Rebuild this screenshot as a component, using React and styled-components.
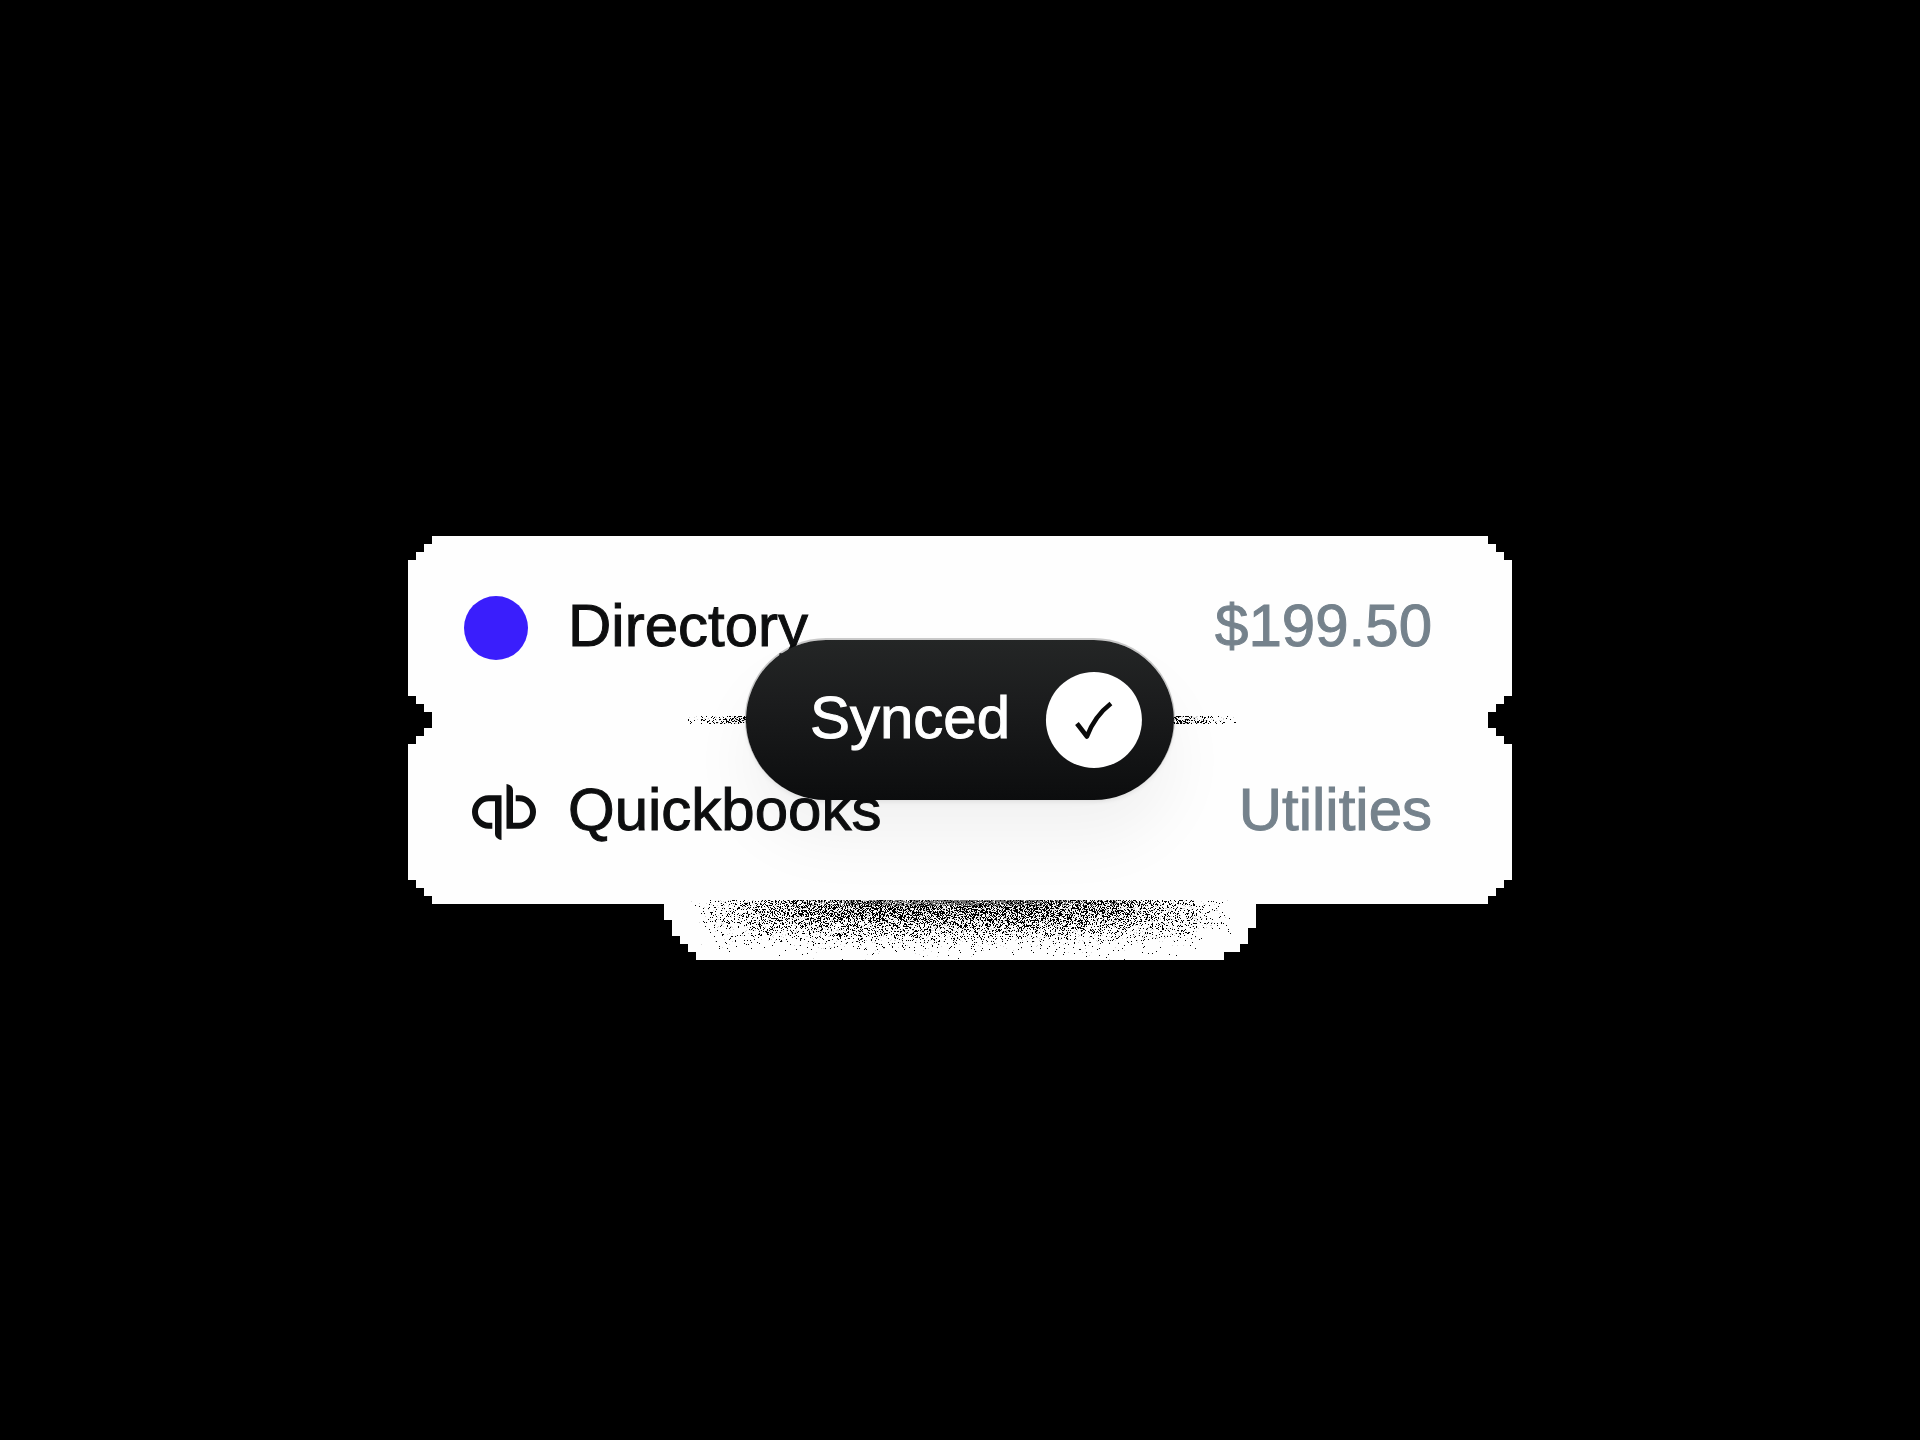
import React from 'react';
import styled, { createGlobalStyle, css } from 'styled-components';

const GlobalStyle = createGlobalStyle`
  *, *::before, *::after { box-sizing: border-box; }
  body {
    margin: 0;
    background: #000;
    font-family: "Liberation Sans", Arial, Helvetica, sans-serif;
  }
`;

const Page = styled.main`
  min-height: 100vh;
  display: grid;
  place-items: center;
  padding: 24px;
  background: #000;
`;

const Ticket = styled.section`
  position: relative;
  width: 100%;
  max-width: 1104px;
`;

const Rows = styled.ul`
  list-style: none;
  margin: 0;
  padding: 0;
  display: flex;
  flex-direction: column;
`;

/* Corners are cut in three 8px stairs. */
const Row = styled.li`
  display: flex;
  align-items: center;
  gap: 32px;
  padding: 56px 80px 56px 56px;
  background: #fefefe;
  clip-path: polygon(
    24px 0, calc(100% - 24px) 0,
    calc(100% - 24px) 8px, calc(100% - 16px) 8px,
    calc(100% - 16px) 16px, calc(100% - 8px) 16px,
    calc(100% - 8px) 24px, 100% 24px,
    100% calc(100% - 24px), calc(100% - 8px) calc(100% - 24px),
    calc(100% - 8px) calc(100% - 16px), calc(100% - 16px) calc(100% - 16px),
    calc(100% - 16px) calc(100% - 8px), calc(100% - 24px) calc(100% - 8px),
    calc(100% - 24px) 100%, 24px 100%,
    24px calc(100% - 8px), 16px calc(100% - 8px),
    16px calc(100% - 16px), 8px calc(100% - 16px),
    8px calc(100% - 24px), 0 calc(100% - 24px),
    0 24px, 8px 24px,
    8px 16px, 16px 16px,
    16px 8px, 24px 8px
  );
`;

const IconSlot = styled.span`
  display: flex;
  align-items: center;
  justify-content: ${({ $align }) => $align};
  flex: none;
  width: 72px;
  height: 72px;
`;

const Dot = styled.span`
  width: 64px;
  height: 64px;
  border-radius: 50%;
  background: #3a1efc;
`;

const labelText = css`
  font-size: 60px;
  line-height: 66px;
  padding-bottom: 4px;
  white-space: nowrap;
  -webkit-text-stroke: 1px currentColor;
`;

const Name = styled.span`
  ${labelText}
  flex: 1;
  color: #0d0e0f;
`;

const Value = styled.span`
  ${labelText}
  color: #75828c;
`;

const Pill = styled.div`
  position: absolute;
  top: 50%;
  left: 50%;
  transform: translate(-50%, -50%);
  display: flex;
  align-items: center;
  gap: 36px;
  padding: 32px 32px 32px 64px;
  border-radius: 80px;
  background: linear-gradient(180deg, #242626 0%, #1b1c1d 40%, #0c0d0e 100%);
  box-shadow: 0 -1px 0 1px rgba(0, 0, 0, 0.2), 0 2px 4px rgba(0, 0, 0, 0.08),
    0 40px 64px rgba(0, 0, 0, 0.05);
`;

const PillText = styled.span`
  ${labelText}
  color: #fff;
`;

const Badge = styled.span`
  display: block;
  width: 96px;
  height: 96px;
  border-radius: 50%;
  background: #fff;
`;

const Seam = styled.svg`
  position: absolute;
  top: 50%;
  left: 50%;
  transform: translate(-50%, -50%);
  display: block;
`;

/* The tab tucks 4px under the lower row and steps in towards its foot. */
const Tab = styled.div`
  position: absolute;
  top: calc(100% - 4px);
  left: 50%;
  transform: translateX(-50%);
  width: 592px;
  background: #fefefe;
  clip-path: polygon(
    0 0, 592px 0, 592px 28px, 584px 28px, 584px 44px, 576px 44px,
    576px 52px, 560px 52px, 560px 60px, 32px 60px, 32px 52px, 24px 52px,
    24px 44px, 16px 44px, 16px 36px, 8px 36px, 8px 20px, 0 20px
  );
`;

const Grain = styled.svg`
  display: block;
`;

function seeded(seed) {
  let s = seed;
  return () => {
    s = (s + 0x6d2b79f5) | 0;
    let t = Math.imul(s ^ (s >>> 15), 1 | s);
    t = (t + Math.imul(t ^ (t >>> 7), 61 | t)) ^ t;
    return ((t ^ (t >>> 14)) >>> 0) / 4294967296;
  };
}

function speckle(width, height, seed, density, haze) {
  const rand = seeded(seed);
  let dark = '';
  let light = '';
  let mid = '';
  for (let y = 0; y < height; y += 1) {
    for (let x = 0; x < width; x += 1) {
      const u = Math.abs(x - width / 2) / (width / 2);
      const v = y / height;
      const d = density(u, v);
      const r = rand();
      const cell = `M${x} ${y}h1v1h-1z`;
      if (haze && rand() < haze(u, v)) mid += cell;
      else if (r < d) dark += cell;
      else if (r < d * 1.5) light += cell;
    }
  }
  return { dark, mid, light };
}

/* Thins out sideways and downwards from the top centre, gone before the stairs. */
const tabGrain = speckle(
  592,
  60,
  7,
  (u, v) => {
    const across = Math.max(0, 1 - Math.pow(u / 0.92, 3));
    const down = Math.exp(-Math.pow(v / 0.54, 2.6));
    return 0.54 * Math.pow(across, 1.3) * down;
  },
  (u, v) => (v < 0.1 ? Math.max(0, 0.85 - u * 1.3) * (1 - v * 5) : 0)
);

const seamGrain = speckle(556, 8, 21, (u) => Math.min(0.42, 1.8 * (1 - u)));

function Speckles({ grain }) {
  return (
    <g shapeRendering="crispEdges">
      <path d={grain.light} fill="#d6d6d6" />
      <path d={grain.mid} fill="#707070" />
      <path d={grain.dark} fill="#000" />
    </g>
  );
}

function QuickbooksLogo() {
  const half =
    'M29.5 11.3H16.7A16.7 16.7 0 0 0 16.7 44.7H20.3V38.7H16.7A10.7 10.7 0 0 1 16.7 17.3H23V49.5C23 53 25.6 55.4 29.5 56Z';
  return (
    <svg width="64" height="56" viewBox="0 0 64 56" fill="#0d0e0f" aria-hidden="true">
      <path d={half} />
      <path d={half} transform="rotate(180 32 28)" />
    </svg>
  );
}

function Check() {
  return (
    <svg width="96" height="96" viewBox="0 0 96 96" fill="none" aria-hidden="true">
      <path
        d="M31 51.5L41 64.5C46 51 54 40 65 31.5"
        stroke="#0a0a0a"
        strokeWidth="4.6"
        strokeLinejoin="round"
      />
    </svg>
  );
}

export default function App() {
  return (
    <>
      <GlobalStyle />
      <Page>
        <Ticket>
          <Rows>
            <Row>
              <IconSlot $align="flex-start">
                <Dot />
              </IconSlot>
              <Name>Directory</Name>
              <Value>$199.50</Value>
            </Row>
            <Row>
              <IconSlot $align="flex-end">
                <QuickbooksLogo />
              </IconSlot>
              <Name>Quickbooks</Name>
              <Value>Utilities</Value>
            </Row>
          </Rows>
          <Seam width="556" height="8" viewBox="0 0 556 8" aria-hidden="true">
            <Speckles grain={seamGrain} />
          </Seam>
          <Pill role="status">
            <PillText>Synced</PillText>
            <Badge>
              <Check />
            </Badge>
          </Pill>
          <Tab>
            <Grain width="592" height="60" viewBox="0 0 592 60" aria-hidden="true">
              <Speckles grain={tabGrain} />
            </Grain>
          </Tab>
        </Ticket>
      </Page>
    </>
  );
}
